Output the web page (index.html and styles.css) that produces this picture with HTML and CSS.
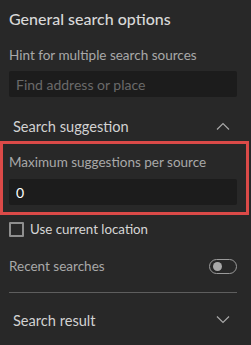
FILE: index.html
```html
<!DOCTYPE html>
<html lang="en">
<head>
    <meta charset="UTF-8">
    <meta name="viewport" content="width=device-width, initial-scale=1.0">
    <title>Search settings</title>
    <link rel="stylesheet" href="styles.css">
</head>
<body>
    <div class="panel">
        <h2 class="panel-title">General search options</h2>
        <div class="field">
            <label class="field-label" for="hint">Hint for multiple search sources</label>
            <input class="text-input" type="text" id="hint" placeholder="Find address or place">
        </div>

        <div class="section-head first">
            <span>Search suggestion</span>
            <svg class="chevron" width="14" height="8" viewBox="0 0 14 8"><path d="M1 7.5 L7 1.5 L13 7.5" fill="none" stroke="#a8a8a8" stroke-width="1.2"/></svg>
        </div>
        <div class="highlight">
            <label class="field-label" for="maxsug">Maximum suggestions per source</label>
            <input class="text-input value" type="text" id="maxsug" value="0">
        </div>

        <label class="check-row">
            <span class="checkbox"></span>
            <span>Use current location</span>
        </label>

        <div class="switch-row">
            <span class="field-label">Recent searches</span>
            <span class="switch"><span class="knob"></span></span>
        </div>

        <hr class="divider">

        <div class="section-head">
            <span>Search result</span>
            <svg class="chevron" width="14" height="8" viewBox="0 0 14 8"><path d="M1 0.5 L7 6.5 L13 0.5" fill="none" stroke="#a8a8a8" stroke-width="1.2"/></svg>
        </div>
    </div>
</body>
</html>
```

FILE: styles.css
```css
*{
    box-sizing: border-box;
    margin: 0;
    padding: 0;
}
body{
    background-color: #282828;
    font-family: "Lato", "Open Sans", sans-serif;
    color: #d6d6d6;
}
.panel{
    width: 251px;
    height: 345px;
    padding-top: 10px;
}
.panel-title{
    font-size: 16px;
    font-weight: 500;
    line-height: 18px;
    color: #d8d8d8;
    padding: 0 9px;
}
.field{
    padding: 0 14px 0 9px;
    margin-top: 18px;
}
.field-label{
    display: block;
    font-size: 13.5px;
    line-height: 18px;
    color: #a9a9a9;
}
.text-input{
    display: block;
    width: 228px;
    height: 26px;
    margin-top: 7px;
    padding: 0 7px;
    background-color: #1c1c1c;
    border: none;
    border-radius: 2px;
    font-family: inherit;
    font-size: 14px;
    color: #6c6c6c;
    outline: none;
}
.text-input::placeholder{
    color: #6a6a6a;
}
.text-input.value{
    color: #ffffff;
}
.section-head{
    display: flex;
    justify-content: space-between;
    align-items: center;
    padding: 0 21px 0 13px;
    height: 30px;
    font-size: 14.6px;
    color: #d2d2d2;
}
.section-head.first{
    margin-top: 14px;
}
.highlight{
    width: 249px;
    padding: 9px 11px 7px 6px;
    border: 3px solid #db4a48;
}
.highlight .text-input{
    margin-top: 8px;
}
.check-row{
    display: flex;
    align-items: center;
    gap: 6px;
    padding: 0 9px;
    margin-top: 6px;
    font-size: 13.3px;
    color: #d6d6d6;
}
.checkbox{
    width: 15px;
    height: 15px;
    border: 2px solid #8f8f8f;
    border-radius: 1px;
}
.switch-row{
    display: flex;
    justify-content: space-between;
    align-items: center;
    padding: 0 14px 0 9px;
    margin-top: 20px;
}
.switch{
    position: relative;
    width: 28px;
    height: 15px;
    border: 1px solid #9a9a9a;
    border-radius: 8px;
}
.switch .knob{
    position: absolute;
    left: 3px;
    top: 2px;
    width: 9px;
    height: 9px;
    border-radius: 50%;
    background-color: #a9a9a9;
}
.divider{
    margin: 17px 14px 0 9px;
    border: none;
    border-top: 1px solid #5e5e5e;
}
.divider + .section-head{
    margin-top: 12px;
}
```
